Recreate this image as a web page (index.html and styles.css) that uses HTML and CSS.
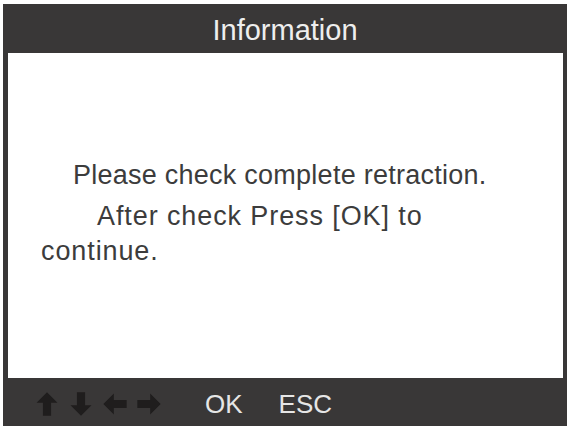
FILE: index.html
```html
<!DOCTYPE html>
<html lang="en">
<head>
    <meta charset="UTF-8">
    <title>Information</title>
    <link rel="stylesheet" href="styles.css">
</head>
<body>
    <div class="screen">
        <header class="title-bar">Information</header>
        <main class="content">
            <p class="line-one">Please check complete retraction.</p>
            <p class="line-two">After check Press [OK] to continue.</p>
        </main>
        <footer class="key-bar">
            <div class="arrows">
                <svg width="28" height="28" viewBox="0 0 24 24"><path d="M12 2 L3 11 H8.5 V22 H15.5 V11 H21 Z" fill="#1f1d1d"/></svg>
                <svg width="28" height="28" viewBox="0 0 24 24"><path d="M12 22 L3 13 H8.5 V2 H15.5 V13 H21 Z" fill="#1f1d1d"/></svg>
                <svg width="28" height="28" viewBox="0 0 24 24"><path d="M2 12 L11 3 V8.5 H22 V15.5 H11 V21 Z" fill="#1f1d1d"/></svg>
                <svg width="28" height="28" viewBox="0 0 24 24"><path d="M22 12 L13 3 V8.5 H2 V15.5 H13 V21 Z" fill="#1f1d1d"/></svg>
            </div>
            <span class="key">OK</span>
            <span class="key">ESC</span>
        </footer>
    </div>
</body>
</html>
```

FILE: styles.css
```css
body {
    margin: 0;
    background: #fff;
    font-family: "Liberation Sans", Arial, sans-serif;
}
.screen {
    margin: 4px 3px 5px 3px;
    height: 422px;
    background: #393737;
    display: flex;
    flex-direction: column;
}
.title-bar {
    height: 49px;
    display: flex;
    align-items: center;
    justify-content: center;
    padding-top: 4px;
    box-sizing: border-box;
    color: #eeeeee;
    font-size: 29px;
}
.content {
    flex: 1;
    margin: 0 4px 0 5px;
    background: #fff;
    padding: 105px 70px 0 33px;
    color: #3c3c3c;
    font-size: 27px;
    letter-spacing: 0.25px;
}
.content p {
    margin: 0;
    line-height: 35px;
}
.line-one {
    text-indent: 32px;
    margin-bottom: 6px !important;
}
.line-two {
    text-indent: 56px;
    letter-spacing: 0.9px;
}
.key-bar {
    height: 48px;
    display: flex;
    align-items: center;
    padding: 4px 0 0 30px;
    box-sizing: border-box;
    color: #e6e6e6;
    font-size: 26px;
}
.arrows {
    display: flex;
    gap: 6px;
    margin-right: 42px;
}
.arrows svg {
    display: block;
}
.key {
    margin-right: 36px;
}
```
